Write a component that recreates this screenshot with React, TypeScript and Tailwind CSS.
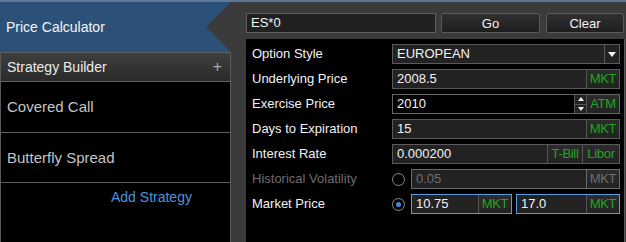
import React from "react";

const font = "font-['Liberation_Sans',Arial,sans-serif]";

function Tag({ label, muted = false, w = "w-[33px]" }: { label: string; muted?: boolean; w?: string }) {
  return (
    <div
      className={`${w} h-full flex items-center justify-center border-l bg-gradient-to-b from-[#2c2c2c] to-[#222] ${
        muted ? "border-[#6a6a6a] text-[#6e6e6e]" : "border-[#555] text-[#1fa51f]"
      } text-[13px] tracking-[-0.3px]`}
    >
      {label}
    </div>
  );
}

function Field({
  value,
  tags = [],
  className = "",
  border = "border-[#5a5a5a]",
  bg = "bg-[#222]",
  text = "text-[#f2f2f2]",
  children,
}: {
  value: string;
  tags?: string[];
  className?: string;
  border?: string;
  bg?: string;
  text?: string;
  children?: React.ReactNode;
}) {
  return (
    <div className={`flex h-[20px] border ${border} ${bg} ${className}`}>
      <div className={`flex-1 flex items-center pl-[4px] text-[13px] ${text}`}>{value}</div>
      {children}
      {tags.map((t) => (
        <Tag key={t} label={t} w={t === "T-Bill" ? "w-[35px]" : t === "Libor" ? "w-[37px]" : "w-[33px]"} />
      ))}
    </div>
  );
}

function Radio({ checked }: { checked?: boolean }) {
  return (
    <div className="w-[19px] h-[20px] flex items-center">
      <div className="w-[13px] h-[13px] rounded-full border border-[#8a8a8a] flex items-center justify-center">
        {checked && <div className="w-[5px] h-[5px] rounded-full bg-[#3f86d8]" />}
      </div>
    </div>
  );
}

function Row({ label, muted, children }: { label: string; muted?: boolean; children: React.ReactNode }) {
  return (
    <div className="flex h-[20px]">
      <div className={`w-[140px] flex items-center text-[13px] ${muted ? "text-[#6c6c6c]" : "text-[#f2f2f2]"}`}>
        {label}
      </div>
      <div className="w-[228px] flex">{children}</div>
    </div>
  );
}

export default function App() {
  return (
    <div className={`w-[626px] h-[242px] bg-[#3b3b3b] flex flex-col overflow-hidden ${font}`}>
      <div className="h-[2px] bg-[#5d7896]" />
      <div className="flex flex-1 min-h-0">
        {/* left nav */}
        <div className="w-[231px] flex flex-col">
          <div className="h-[50px] bg-[#3b3b3b]">
            <div className="h-full bg-[#2c5178] flex items-center pl-[6px] text-[14px] text-[#f4f4f4] [clip-path:polygon(0_0,100%_0,calc(100%-25px)_50%,100%_100%,0_100%)]">
              Price Calculator
            </div>
          </div>
          <div className="flex-1 flex flex-col bg-black border-l border-r border-[#5a5a5a]">
            <div className="h-[30px] flex items-center justify-between pl-[6px] pr-[8px] border-t border-b border-[#5f5f5f] bg-gradient-to-b from-[#3e3e3e] to-[#2a2a2a] text-[14px] text-[#ececec]">
              <span>Strategy Builder</span>
              <span className="text-[16px] text-[#a8a8a8] leading-none">+</span>
            </div>
            <div className="h-[51px] flex items-center pl-[6px] border-b border-[#5f5f5f] text-[15px] text-[#c4c4c4]">
              Covered Call
            </div>
            <div className="h-[50px] flex items-center pl-[6px] pt-[2px] border-b border-[#5f5f5f] text-[15px] text-[#c4c4c4]">
              Butterfly Spread
            </div>
            <div className="pl-[110px] pt-[4px] text-[14px] text-[#4a93dc]">Add Strategy</div>
          </div>
        </div>

        {/* right content */}
        <div className="flex-1 flex flex-col pl-[15px] pr-[1px] pt-[11px]">
          <div className="flex h-[20px]">
            <div className="w-[190px] border border-[#5e5e5e] bg-[#202020] flex items-center pl-[4px] text-[13px] text-[#f2f2f2]">
              ES*0
            </div>
            <button className="ml-[5px] w-[99px] border border-[#5a5a5a] rounded-[2px] bg-gradient-to-b from-[#303030] to-[#1e1e1e] text-[13px] text-[#f2f2f2]">
              Go
            </button>
            <button className="ml-[6px] w-[78px] border border-[#5a5a5a] rounded-[2px] bg-gradient-to-b from-[#303030] to-[#1e1e1e] text-[13px] text-[#f2f2f2]">
              Clear
            </button>
          </div>
          <div className="mt-[6px] flex-1 bg-black border-r border-[#5a5a5a] pl-[6px] pt-[5px] flex flex-col gap-[5px]">
            <Row label="Option Style">
              <div className="flex-1 flex h-[20px] border border-[#5a5a5a] bg-[#222]">
                <div className="flex-1 flex items-center pl-[4px] text-[13px] text-[#f2f2f2]">EUROPEAN</div>
                <div className="w-[15px] border-l border-[#5a5a5a] flex items-center justify-center">
                  <svg width="8" height="5" viewBox="0 0 8 5">
                    <path d="M0 0h8L4 5z" fill="#f0f0f0" />
                  </svg>
                </div>
              </div>
            </Row>
            <Row label="Underlying Price">
              <Field value="2008.5" tags={["MKT"]} className="flex-1" />
            </Row>
            <Row label="Exercise Price">
              <Field value="2010" tags={["ATM"]} className="flex-1" bg="bg-black" border="border-[#666]">
                <div className="w-[12px] h-full flex flex-col border-l border-[#555] bg-[#222]">
                  <div className="flex-1 flex items-center justify-center border-b border-[#555]">
                    <svg width="6" height="4" viewBox="0 0 6 4">
                      <path d="M0 4h6L3 0z" fill="#f0f0f0" />
                    </svg>
                  </div>
                  <div className="flex-1 flex items-center justify-center">
                    <svg width="6" height="4" viewBox="0 0 6 4">
                      <path d="M0 0h6L3 4z" fill="#f0f0f0" />
                    </svg>
                  </div>
                </div>
              </Field>
            </Row>
            <Row label="Days to Expiration">
              <Field value="15" tags={["MKT"]} className="flex-1" />
            </Row>
            <Row label="Interest Rate">
              <Field value="0.000200" tags={["T-Bill", "Libor"]} className="flex-1" />
            </Row>
            <Row label="Historical Volatility" muted>
              <Radio />
              <div className="flex-1 flex h-[20px] border border-[#6a6a6a] bg-[#222]">
                <div className="flex-1 flex items-center pl-[4px] text-[13px] text-[#6e6e6e]">0.05</div>
                <Tag label="MKT" muted />
              </div>
            </Row>
            <Row label="Market Price">
              <Radio checked />
              <Field value="10.75" tags={["MKT"]} className="w-[101px]" border="border-[#5b9be0]" />
              <Field value="17.0" tags={["MKT"]} className="ml-[4px] flex-1" border="border-[#5b9be0]" />
            </Row>
          </div>
        </div>
      </div>
    </div>
  );
}
